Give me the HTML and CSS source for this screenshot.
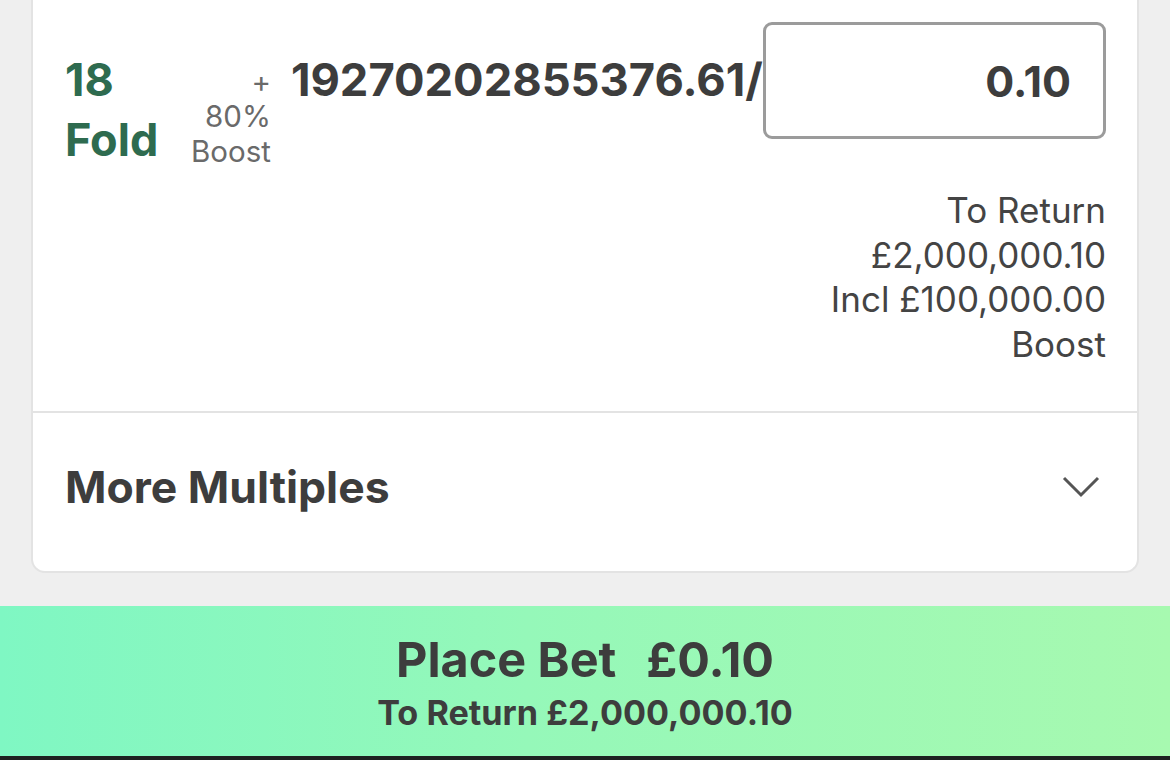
FILE: index.html
```html
<!DOCTYPE html>
<html lang="en">
<head>
<meta charset="utf-8">
<title>Bet Slip</title>
<link rel="stylesheet" href="styles.css">
</head>
<body>
<div class="page">
  <section class="card">
    <div class="bet">
      <div class="bet-row">
        <div class="fold">18<br>Fold</div>
        <div class="boost">+<br>80%<br>Boost</div>
        <div class="odds">19270202855376.61/</div>
        <div class="stake">0.10</div>
      </div>
      <div class="returns">
        <div>To Return</div>
        <div>£2,000,000.10</div>
        <div>Incl £100,000.00</div>
        <div>Boost</div>
      </div>
    </div>
    <div class="more">
      <span class="more-title">More Multiples</span>
      <svg class="chevron" width="38" height="22" viewBox="0 0 38 22" aria-hidden="true">
        <polyline points="2,2 19,19 36,2" fill="none" stroke="#555555" stroke-width="3"/>
      </svg>
    </div>
  </section>
  <div class="place-bet">
    <div class="place-line">Place Bet<span class="place-amount">£0.10</span></div>
    <div class="place-return">To Return £2,000,000.10</div>
  </div>
  <div class="strip"></div>
</div>
</body>
</html>
```
FILE: styles.css
```css
* { box-sizing: border-box; }
html, body {
  margin: 0;
  padding: 0;
  background: #efefef;
  font-family: Inter, "Liberation Sans", Arial, sans-serif;
  color: #3d3d3d;
}
.page {
  width: 1170px;
  height: 760px;
  overflow: hidden;
  display: flex;
  flex-direction: column;
}
.card {
  margin-left: 31px;
  width: 1108px;
  background: #ffffff;
  border: 2px solid #e3e3e3;
  border-top: none;
  border-radius: 0 0 14px 14px;
}
.bet {
  height: 411px;
  padding: 22px 31px 0 32px;
}
.bet-row {
  display: flex;
  align-items: flex-start;
}
.fold {
  margin-top: 28px;
  font-size: 45px;
  line-height: 60px;
  font-weight: 700;
  color: #2e6b4f;
  width: 126px;
  flex: none;
}
.boost {
  margin-top: 42px;
  font-size: 29.5px;
  line-height: 35px;
  color: #6a6a6a;
  text-align: right;
  flex: none;
}
.odds {
  margin-top: 28px;
  margin-left: 20px;
  flex: 1;
  min-width: 0;
  white-space: nowrap;
  font-size: 45.3px;
  line-height: 60px;
  font-weight: 700;
  color: #3d3d3d;
}
.stake {
  flex: none;
  width: 343px;
  height: 117px;
  border: 3px solid #9b9b9b;
  border-radius: 9px;
  display: flex;
  align-items: center;
  justify-content: flex-end;
  padding-right: 32px;
  font-size: 43px;
  font-weight: 700;
  color: #3d3d3d;
}
.returns {
  margin-top: 18px;
  text-align: right;
  font-size: 35px;
  line-height: 44.5px;
  color: #444444;
}
.more {
  height: 160px;
  border-top: 2px solid #e3e3e3;
  display: flex;
  align-items: center;
  justify-content: space-between;
  padding: 0 37px 10px 32px;
}
.more-title {
  font-size: 44.5px;
  font-weight: 700;
  color: #3d3d3d;
}
.chevron { display: block; }
.place-bet {
  margin-top: 33px;
  height: 150px;
  flex: none;
  background: linear-gradient(90deg, #7ff7c3 0%, #95f8b9 45%, #a7f9b0 100%);
  text-align: center;
  padding-top: 28px;
  color: #3d3d3d;
}
.place-line {
  font-size: 48.5px;
  line-height: 52px;
  font-weight: 700;
}
.place-amount { margin-left: 30px; }
.place-return {
  margin-top: 5px;
  font-size: 34.2px;
  line-height: 44px;
  font-weight: 700;
}
.strip {
  height: 4px;
  flex: none;
  background: #1d2020;
}
```
